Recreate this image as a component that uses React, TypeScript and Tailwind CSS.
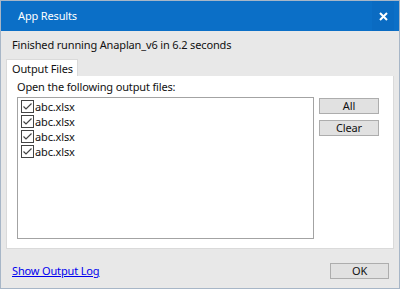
import React from "react";

function Check() {
  return (
    <svg width="13" height="13" viewBox="0 0 13 13" className="shrink-0">
      <rect x="0.5" y="0.5" width="12" height="12" fill="#ffffff" stroke="#444444" />
      <path d="M2.5 6.5 L5 9 L10.5 3.5" fill="none" stroke="#444444" strokeWidth="1.2" />
    </svg>
  );
}

export default function App() {
  const files = ["abc.xlsx", "abc.xlsx", "abc.xlsx", "abc.xlsx"];
  return (
    <div
      className="w-[400px] h-[289px] bg-[#e8e8e8] border border-[#a7b6c7] flex flex-col text-[11px] tracking-[-0.15px] text-[#111] overflow-hidden"
      style={{ fontFamily: '"Noto Sans", "Open Sans", sans-serif' }}
    >
      <div className="h-[30px] bg-[#0b6fc7] flex items-center justify-between shrink-0">
        <span className="pl-[17px] text-white">App Results</span>
        <div className="w-[22px] h-[30px] mr-[5px] bg-[#0a6bc2] flex items-center justify-center">
          <svg width="9" height="9" viewBox="0 0 9 9">
            <path d="M1 1 L8 8 M8 1 L1 8" stroke="#ffffff" strokeWidth="2" />
          </svg>
        </div>
      </div>
      <div className="pl-[11px] pt-[5px] h-[28px] leading-[18px]">Finished running Anaplan_v6 in 6.2 seconds</div>
      <div className="px-[5px] flex flex-col">
        <div className="flex">
          <div className="bg-white h-[17px] pl-[5px] pr-[4px] leading-[17px] border-t border-l border-r border-[#dadada]">Output Files</div>
        </div>
        <div className="bg-white h-[173px] border border-[#dadada] border-t-0 flex flex-col pl-[10px] pt-[2px]">
          <div className="leading-[17px] mb-[2px]">Open the following output files:</div>
          <div className="flex">
            <div className="w-[297px] h-[142px] border border-[#a3a3a3] pt-[1px] pl-[3px] flex flex-col">
              {files.map((f, i) => (
                <div key={i} className="h-[15px] flex items-center gap-[1px]">
                  <Check />
                  <span className="leading-[15px]">{f}</span>
                </div>
              ))}
            </div>
            <div className="flex flex-col ml-[5px] gap-[6px] pt-[1px]">
              <button className="w-[60px] h-[16px] bg-[#e1e1e1] border border-[#adadad] leading-[14px]">All</button>
              <button className="w-[60px] h-[16px] bg-[#e1e1e1] border border-[#adadad] leading-[14px]">Clear</button>
            </div>
          </div>
        </div>
      </div>
      <div className="flex items-center justify-between pl-[11px] pr-[10px] mt-[14px]">
        <a className="text-[#0000ee] underline leading-[16px]">Show Output Log</a>
        <button className="w-[59px] h-[16px] bg-[#e1e1e1] border border-[#adadad] leading-[14px]">OK</button>
      </div>
    </div>
  );
}
